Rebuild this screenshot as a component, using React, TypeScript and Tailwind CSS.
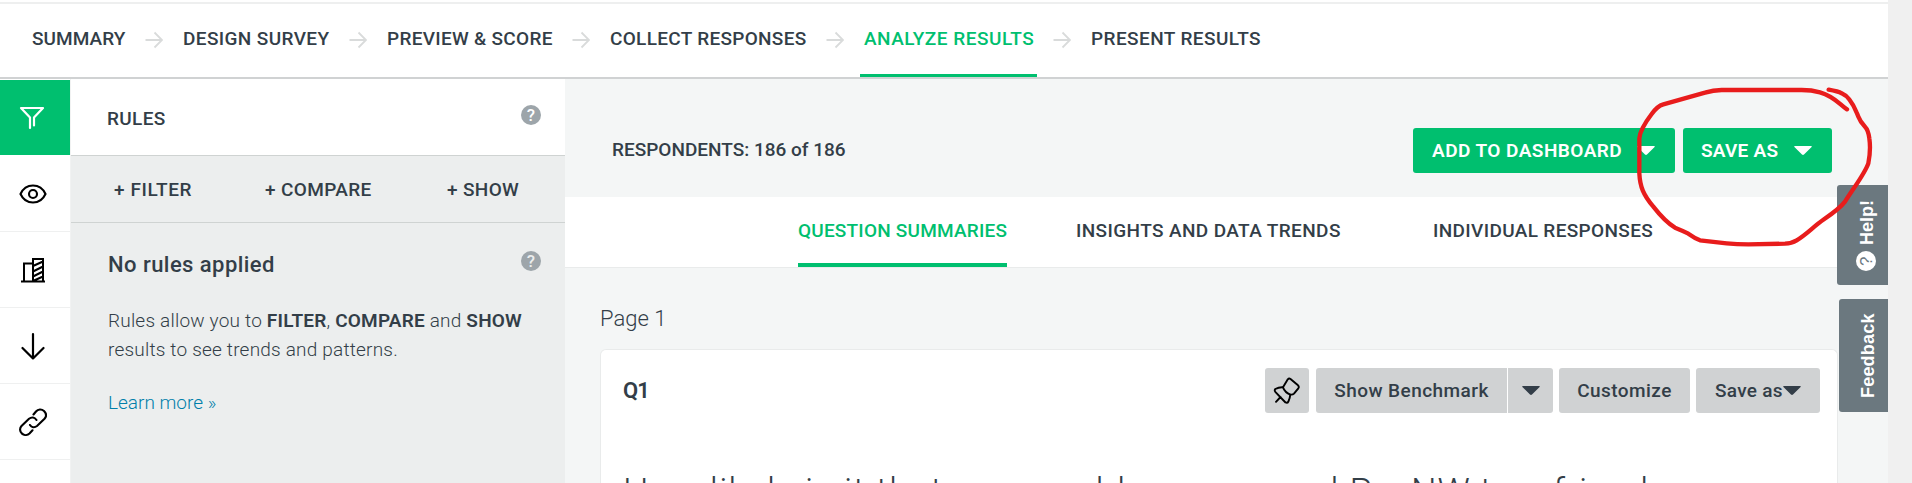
import React from 'react';

interface IconProps {
  className?: string;
}

const Caret: React.FC<IconProps> = ({ className }) => (
  <svg width="18" height="9" viewBox="0 0 18 9" fill="currentColor" className={`shrink-0 ${className ?? ''}`}>
    <path d="M0.8 0h16.4c.6 0 .8.5.4.9L10 8.5c-.6.6-1.4.6-2 0L.4.9C0 .5.2 0 .8 0z" />
  </svg>
);

const HelpIcon: React.FC<IconProps> = ({ className }) => (
  <span
    className={`flex size-5 shrink-0 items-center justify-center rounded-full text-[17px] leading-none font-medium ${className}`}
  >
    ?
  </span>
);

const StepArrow: React.FC = () => (
  <svg width="18" height="18" viewBox="0 0 18 18" fill="none" stroke="#d9dbdb" strokeWidth="1.8" className="mt-px shrink-0">
    <path d="M0.5 9H16.5M9.5 1.5L17 9L9.5 16.5" />
  </svg>
);

const FilterIcon = () => (
  <svg width="26" height="26" viewBox="0 0 26 26" fill="none" stroke="currentColor" strokeWidth="2.2" strokeLinecap="round" strokeLinejoin="round">
    <path d="M11 23V12.5L2 3H24L15 12.5V20.5" />
  </svg>
);

const EyeIcon = () => (
  <svg width="28" height="28" viewBox="0 0 28 28" fill="none" stroke="currentColor" strokeWidth="2.1">
    <path d="M1.5 14C4 8.5 8.5 5.5 14 5.5S24 8.5 26.5 14C24 19.5 19.5 22.5 14 22.5S4 19.5 1.5 14z" />
    <circle cx="14" cy="14" r="4" />
  </svg>
);

const BuildingIcon = () => (
  <svg width="26" height="26" viewBox="0 0 26 26" fill="none" stroke="currentColor" strokeWidth="2">
    <path d="M1 24.5H25M4 24V6.5H13M13 24.5V2H23V24.5M13 9L23 4.5M13 14.5L23 9.5M13 19.5L23 14.5M13 24L23 19.5" />
  </svg>
);

const DownIcon = () => (
  <svg width="26" height="28" viewBox="0 0 26 28" fill="none" stroke="currentColor" strokeWidth="2.2" strokeLinecap="round" strokeLinejoin="round">
    <path d="M13 2V26.5M2.5 16L13 26.5L23.5 16" />
  </svg>
);

const LinkIcon = () => (
  <svg width="28" height="28" viewBox="0 0 28 28" fill="none" stroke="currentColor" strokeWidth="2.1" strokeLinecap="round">
    <path d="M14.5 6.5L17 3.5C19 1.2 22.5 0.8 25 3C27.4 5.4 27.5 8.5 25.5 10.8L18 18C15.5 20 12.5 19.5 11 17" />
    <path d="M17.5 12C15.5 9 12.5 8.8 10 10.8L2.5 18C0.5 20.2 0.6 23.5 3 25.6C5.2 27.6 8.5 27.3 10.5 25.5L13.5 22.3" />
  </svg>
);

const PinIcon = () => (
  <svg width="28" height="28" viewBox="0 0 28 28" fill="none" stroke="#000" strokeWidth="1.9" strokeLinejoin="round" strokeLinecap="round">
    <path d="M10 10.3L14.8 2.3Q16 0.9 17.5 2L25 8.3Q26.4 9.7 25.3 11.3L21 16.7Q19.8 17.9 17.3 17.6Q12 15.5 10 10.3z" />
    <path d="M10 10.3Q6 10 2.3 12Q1.2 13.2 2.3 14.8L12.5 25.5Q14.5 26.4 15.4 24.5Q17 21 17.3 17.6M7.5 20L3 24.8" />
  </svg>
);

const steps = [
  { label: 'SUMMARY', width: 'w-[93px]', tracking: 'tracking-[0.05px]' },
  { label: 'DESIGN SURVEY', width: 'w-[146px]', tracking: 'tracking-[0.38px]' },
  { label: 'PREVIEW & SCORE', width: 'w-[165px]', tracking: 'tracking-[0.3px]' },
  { label: 'COLLECT RESPONSES', width: 'w-[196px]', tracking: 'tracking-[0.3px]' },
  { label: 'ANALYZE RESULTS', width: 'w-[169px]', tracking: 'tracking-[0.5px]', active: true },
  { label: 'PRESENT RESULTS', width: 'w-[169px]', tracking: 'tracking-[0.42px]' },
];

const tools = [
  { name: 'view', icon: <EyeIcon /> },
  { name: 'benchmark', icon: <BuildingIcon /> },
  { name: 'export', icon: <DownIcon /> },
  { name: 'share', icon: <LinkIcon /> },
];

const Header: React.FC = () => (
  <header className="mr-6 flex h-[77px] border-t-2 border-b-2 border-t-[#eeefef] border-b-[#d0d2d3] bg-white pl-8">
    <nav className="flex items-stretch gap-5">
      {steps.map((step, index) => (
        <React.Fragment key={step.label}>
          {index > 0 && (
            <div className="flex items-center pb-0.5">
              <StepArrow />
            </div>
          )}
          <div
            className={`relative flex items-center pb-[3px] text-[19px] leading-7 font-medium whitespace-nowrap ${step.width} ${step.tracking} ${
              step.active ? 'text-[#00bf6f]' : ''
            }`}
          >
            {step.label}
            {step.active && <span className="absolute -right-1 bottom-0 -left-1 h-[3px] bg-[#00bf6f]" />}
          </div>
        </React.Fragment>
      ))}
    </nav>
  </header>
);

const Sidebar: React.FC = () => (
  <aside className="w-[71px] shrink-0 border-r border-[#f1f2f2] bg-white text-black">
    <div className="my-px flex h-[75px] items-center justify-center bg-[#00bf6f] pr-1.5 text-white">
      <FilterIcon />
    </div>
    {tools.map((tool) => (
      <div key={tool.name} className="flex h-[76px] items-center justify-center border-b border-[#eff0f0] pr-[5px]">
        {tool.icon}
      </div>
    ))}
  </aside>
);

const RulesPanel: React.FC = () => (
  <section className="w-[494px] shrink-0 bg-[#eceeee]">
    <div className="flex h-[77px] items-center justify-between border-b border-[#cfd3d2] bg-white pr-6 pl-9">
      <h2 className="mt-1 text-[19px] leading-7 font-medium tracking-[0.35px]">RULES</h2>
      <HelpIcon className="mb-1 bg-[#9da5aa] text-white" />
    </div>
    <div className="flex h-[67px] items-center border-b border-[#cfd3d2] pt-0.5 pl-[43px] text-[19px] leading-7 font-medium tracking-[0.35px]">
      <span className="w-[151px] tracking-[0.6px]">+ FILTER</span>
      <span className="w-[182px]">+ COMPARE</span>
      <span>+ SHOW</span>
    </div>
    <div className="pt-6 pr-6 pl-[37px]">
      <div className="flex h-9 items-center justify-between">
        <h3 className="mb-0.5 text-[22px] font-medium tracking-[0.45px]">No rules applied</h3>
        <HelpIcon className="mb-2 bg-[#9da5aa] text-[#eceeee]" />
      </div>
      <p className="mt-[23px] text-[19px] leading-[29px] font-light tracking-[0.2px] whitespace-nowrap">
        Rules allow you to <b className="font-semibold">FILTER</b>, <b className="font-semibold">COMPARE</b> and{' '}
        <b className="font-semibold">SHOW</b>
        <br />
        results to see trends and patterns.
      </p>
      <a className="mt-6 block text-[19px] leading-[29px] font-light text-[#007faa]">Learn more »</a>
    </div>
  </section>
);

const Results: React.FC = () => (
  <main className="min-w-0 flex-1 bg-[#f4f6f6]">
    <div className="flex h-[118px] items-center justify-between pr-14 pl-[47px] text-[19px] leading-7 font-medium">
      <span className="mt-6">RESPONDENTS: 186 of 186</span>
      <div className="mt-[25px] flex gap-2 text-white">
        <button className="flex h-[45px] w-[262px] items-center justify-between rounded-[3px] bg-[#00bf6f] pr-5 pl-[19px] font-semibold tracking-[0.45px] whitespace-nowrap">
          ADD TO DASHBOARD
          <Caret />
        </button>
        <button className="flex h-[45px] w-[149px] items-center justify-between rounded-[3px] bg-[#00bf6f] pr-5 pl-[18px] font-semibold tracking-[0.25px] whitespace-nowrap">
          SAVE AS
          <Caret />
        </button>
      </div>
    </div>
    <div className="flex h-[71px] border-b border-[#e9ebeb] bg-white pl-[233px] text-[19px] leading-7 font-medium tracking-[0.2px] whitespace-nowrap">
      <span className="mr-[69px] flex w-[209px] items-center border-b-4 border-[#00bf6f] pt-px text-[#00bf6f]">
        QUESTION SUMMARIES
      </span>
      <span className="flex w-[357px] items-center pb-[3px] tracking-[0.38px]">INSIGHTS AND DATA TRENDS</span>
      <span className="flex items-center pb-[3px] tracking-[0.35px]">INDIVIDUAL RESPONSES</span>
    </div>
    <h1 className="mt-[37px] ml-[35px] text-[22px] leading-[28px] font-light">Page 1</h1>
    <div className="mt-4 ml-[35px] h-[140px] w-[1238px] rounded-t-md border border-b-0 border-[#e9ebeb] bg-white">
      <div className="flex justify-between pt-[18px] pr-[17px] pl-[22px]">
        <h2 className="mt-1.5 text-[22px] font-semibold tracking-[-1px]">Q1</h2>
        <div className="flex text-[19px] leading-7 font-medium tracking-[0.45px] whitespace-nowrap">
          <button className="mr-[7px] flex h-[45px] w-11 items-center justify-center rounded-[3px] bg-[#d0d2d3]">
            <PinIcon />
          </button>
          <button className="mr-px h-[45px] w-[191px] rounded-l-[3px] bg-[#d0d2d3]">Show Benchmark</button>
          <button className="mr-1.5 flex h-[45px] w-[45px] items-center justify-center rounded-r-[3px] bg-[#d0d2d3]">
            <Caret />
          </button>
          <button className="mr-1.5 h-[45px] w-[131px] rounded-[3px] bg-[#d0d2d3]">Customize</button>
          <button className="flex h-[45px] w-[124px] items-center rounded-[3px] bg-[#d0d2d3] pl-[19px] tracking-[0.3px]">
            Save as
            <Caret />
          </button>
        </div>
      </div>
      <p className="mt-[59px] pl-[22px] text-[36px] leading-[40px] font-light tracking-[1.3px] whitespace-nowrap">
        How likely is it that you would recommend <span className="tracking-[-1.8px]">Pac </span>
        <span className="tracking-[0.9px]">NW to a friend</span>
      </p>
    </div>
  </main>
);

const SideTabs: React.FC = () => (
  <div className="absolute top-[185px] right-6 flex flex-col items-end gap-3.5 font-['Liberation_Sans',sans-serif] text-lg font-bold text-white">
    <div className="flex h-[100px] w-[51px] rotate-180 items-center rounded-r-[3px] bg-[#6b787f] pt-3.5 pr-2 [writing-mode:vertical-rl]">
      <HelpIcon className="mb-1.5 bg-white text-[#6b787f]" />
      Help!
    </div>
    <div className="flex h-[113px] w-[49px] rotate-180 items-center justify-center rounded-r-[3px] bg-[#6b787f] pr-2 tracking-[0.2px] [writing-mode:vertical-rl]">
      Feedback
    </div>
  </div>
);

const PenCircle: React.FC = () => (
  <svg
    width="292"
    height="190"
    viewBox="0 0 876 570"
    fill="none"
    stroke="#e81c1c"
    strokeWidth="13"
    strokeLinecap="round"
    strokeLinejoin="round"
    className="pointer-events-none absolute top-[70px] left-[1620px]"
  >
    <path d="M681 118C660 105 645 80 600 67Q575 60 545 60H305Q280 60 255 68L130 103Q112 108 95 132Q60 178 58 205V310C60 350 70 375 100 410Q135 455 165 473Q190 483 205 491Q225 505 240 511L320 520Q350 523 385 523L495 521Q515 520 530 511C560 493 580 470 612 448Q660 415 675 395C700 355 735 310 745 280Q753 240 748 205Q745 180 735 170C715 150 718 145 710 128Q690 80 665 70Q655 64 626 59" />
  </svg>
);

export default function App() {
  return (
    <div className="relative h-[483px] w-[1912px] overflow-hidden bg-[#f0f0f0] font-[Roboto,sans-serif] text-[#333e48]">
      <div className="mr-6 h-0.5 bg-white" />
      <Header />
      <div className="mr-6 flex h-[404px]">
        <Sidebar />
        <RulesPanel />
        <Results />
      </div>
      <SideTabs />
      <PenCircle />
    </div>
  );
}
